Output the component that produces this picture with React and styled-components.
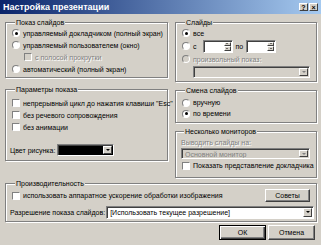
import React from 'react';
import styled, { createGlobalStyle } from 'styled-components';

const GlobalStyle = createGlobalStyle`
  html, body {
    margin: 0;
    padding: 0;
    background: #d4d0c8;
  }
  body {
    font-family: "Liberation Sans", Arial, sans-serif;
    font-size: 7px;
    color: #000;
  }
`;

const Window = styled.div`
  width: 321px;
  height: 245px;
  background: #d4d0c8;
  display: flex;
  flex-direction: column;
  overflow: hidden;
`;

const TitleBar = styled.div`
  height: 14px;
  display: flex;
  align-items: center;
  justify-content: space-between;
  padding: 0 3px 0 3px;
  background: linear-gradient(to right, #0a246a, #a6caf0);
`;

const Title = styled.span`
  color: #fff;
  font-weight: bold;
  font-size: 9px;
`;

const TitleButtons = styled.div`
  display: flex;
  gap: 1px;
`;

const TitleButton = styled.span`
  width: 9px;
  height: 8px;
  box-sizing: border-box;
  background: #d4d0c8;
  border: 1px solid;
  border-color: #fff #404040 #404040 #fff;
  display: grid;
  place-items: center;
  font-size: 7px;
  font-weight: bold;
  line-height: 1;
`;

const Body = styled.div`
  padding: 4px 4px 0 5px;
  display: flex;
  flex-direction: column;
`;

const Columns = styled.div`
  display: grid;
  grid-template-columns: 163px 142px;
  column-gap: 7px;
  align-items: start;
`;

const Column = styled.div`
  display: flex;
  flex-direction: column;
  gap: ${p => p.$gap}px;
`;

const Group = styled.fieldset`
  margin: ${p => p.$mt || 0}px 0 0 0;
  box-sizing: border-box;
  height: ${p => p.$h}px;
  min-width: 0;
  padding: ${p => p.$pad || '0 4px 0 6px'};
  border: 1px solid #808080;
  box-shadow: inset 1px 1px #fff, 1px 1px #fff;
  display: flex;
  flex-direction: column;
`;

const Legend = styled.legend`
  margin-left: 3px;
  padding: 0 1px;
  line-height: 9px;
  background: #d4d0c8;
`;

const Row = styled.div`
  display: flex;
  align-items: center;
  gap: ${p => p.$gap ?? 3}px;
  height: ${p => p.$h || 12}px;
  margin-top: ${p => p.$mt || 0}px;
  padding-left: ${p => p.$indent || 0}px;
  white-space: nowrap;
`;

const Mark = styled.span`
  flex: none;
  width: 8px;
  height: 8px;
  box-sizing: border-box;
  border: 1px solid;
  border-color: #808080 #fff #fff #808080;
  border-radius: ${p => (p.$round ? '50%' : '0')};
  background: ${p => (p.$disabled ? '#d4d0c8' : '#fff')};
  display: grid;
  place-items: center;

  &::after {
    content: '';
    display: ${p => (p.$checked ? 'block' : 'none')};
    width: 3px;
    height: 3px;
    border-radius: 50%;
    background: #000;
  }
`;

const Text = styled.span`
  color: ${p => (p.$disabled ? '#808080' : '#000')};
  text-shadow: ${p => (p.$disabled ? '1px 1px #fff' : 'none')};
`;

const Field = styled.div`
  flex: none;
  width: ${p => p.$w}px;
  height: ${p => p.$h || 12}px;
  box-sizing: border-box;
  margin-left: ${p => p.$ml || 0}px;
  border: 1px solid;
  border-color: #808080 #fff #fff #808080;
  box-shadow: inset 1px 1px #404040;
  background: ${p => p.$fill || '#fff'};
  display: flex;
  align-items: stretch;
`;

const FieldValue = styled.span`
  flex: 1;
  display: flex;
  align-items: center;
  padding: 1px 0 0 3px;
  overflow: hidden;
  white-space: nowrap;
  color: ${p => (p.$disabled ? '#808080' : '#000')};
`;

const DropButton = styled.span`
  flex: none;
  width: 9px;
  margin: 1px 1px 1px 0;
  box-sizing: border-box;
  background: #d4d0c8;
  border: 1px solid;
  border-color: #fff #404040 #404040 #fff;
  display: grid;
  place-items: center;

  &::after {
    content: '';
    border-left: 2px solid transparent;
    border-right: 2px solid transparent;
    border-top: 2px solid ${p => (p.$disabled ? '#808080' : '#000')};
  }
`;

const SpinButtons = styled.span`
  flex: none;
  width: 7px;
  margin: 1px 1px 1px 0;
  display: flex;
  flex-direction: column;
`;

const SpinHalf = styled.span`
  flex: 1;
  box-sizing: border-box;
  background: #d4d0c8;
  border: 1px solid;
  border-color: #fff #404040 #404040 #fff;
  display: grid;
  place-items: center;

  &::after {
    content: '';
    border-left: 1.5px solid transparent;
    border-right: 1.5px solid transparent;
    ${p => (p.$up ? 'border-bottom' : 'border-top')}: 1.5px solid #000;
  }
`;

const Button = styled.div`
  width: ${p => p.$w}px;
  height: ${p => p.$h}px;
  box-sizing: border-box;
  border: 1px solid;
  border-color: ${p => (p.$default ? '#000' : '#fff #404040 #404040 #fff')};
  box-shadow: ${p =>
    p.$default
      ? 'inset 1px 1px #fff, inset -1px -1px #404040, inset -2px -2px #808080'
      : 'inset -1px -1px #808080'};
  display: grid;
  place-items: center;
  flex: none;
  margin-left: ${p => (p.$push ? 'auto' : '0')};
`;

const Footer = styled.div`
  display: flex;
  justify-content: flex-end;
  gap: 2px;
  margin: 3px 2px 0 0;
`;

const Radio = ({ checked, disabled, children }) => (
  <Row>
    <Mark $round $checked={checked} $disabled={disabled} />
    <Text $disabled={disabled}>{children}</Text>
  </Row>
);

const Check = ({ disabled, indent, children }) => (
  <Row $indent={indent}>
    <Mark $disabled={disabled} />
    <Text $disabled={disabled}>{children}</Text>
  </Row>
);

const Spin = ({ w, ml }) => (
  <Field $w={w} $h={13} $ml={ml}>
    <FieldValue />
    <SpinButtons>
      <SpinHalf $up />
      <SpinHalf />
    </SpinButtons>
  </Field>
);

const Dropdown = ({ w, h, fill, disabled, value }) => (
  <Field $w={w} $h={h} $fill={disabled ? '#d4d0c8' : fill}>
    <FieldValue $disabled={disabled}>{value}</FieldValue>
    <DropButton $disabled={disabled} />
  </Field>
);

export default function App() {
  return (
    <>
      <GlobalStyle />
      <Window>
        <TitleBar>
          <Title>Настройка презентации</Title>
          <TitleButtons>
            <TitleButton>?</TitleButton>
            <TitleButton>×</TitleButton>
          </TitleButtons>
        </TitleBar>
        <Body>
          <Columns>
            <Column $gap={7}>
              <Group $h={60}>
                <Legend>Показ слайдов</Legend>
                <Radio checked>управляемый докладчиком (полный экран)</Radio>
                <Radio>управляемый пользователем (окно)</Radio>
                <Check disabled indent={12}>с полосой прокрутки</Check>
                <Radio>автоматический (полный экран)</Radio>
              </Group>
              <Group $h={76} $pad="3px 2px 0 6px">
                <Legend>Параметры показа</Legend>
                <Check>непрерывный цикл до нажатия клавиши "Esc"</Check>
                <Check>без речевого сопровождения</Check>
                <Check>без анимации</Check>
                <Row $mt={11} $gap={2} style={{ marginLeft: -2 }}>
                  <Text>Цвет рисунка:</Text>
                  <Dropdown w={57} fill="#000" />
                </Row>
              </Group>
            </Column>
            <Column $gap={4}>
              <Group $h={64}>
                <Legend>Слайды</Legend>
                <Radio checked>все</Radio>
                <Row $h={14}>
                  <Mark $round />
                  <Text>с</Text>
                  <Spin w={30} ml={3} />
                  <Text>по</Text>
                  <Spin w={30} />
                </Row>
                <Radio disabled>произвольный показ:</Radio>
                <Row $h={13} $indent={11}>
                  <Dropdown w={117} disabled />
                </Row>
              </Group>
              <Group $h={37} $pad="2px 4px 0 6px">
                <Legend>Смена слайдов</Legend>
                <Row $h={11}>
                  <Mark $round />
                  <Text>вручную</Text>
                </Row>
                <Row $h={11}>
                  <Mark $round $checked />
                  <Text>по времени</Text>
                </Row>
              </Group>
              <Group $h={51} $pad="1px 4px 0 5px">
                <Legend>Несколько мониторов</Legend>
                <Row $h={11}>
                  <Text $disabled>Выводить слайды на:</Text>
                </Row>
                <Row $h={11}>
                  <Dropdown w={129} h={11} disabled value="Основной монитор" />
                </Row>
                <Row $h={13} $indent={1}>
                  <Mark />
                  <Text>Показать представление докладчика</Text>
                </Row>
              </Group>
            </Column>
          </Columns>
          <Group $h={43} $mt={1} $pad="1px 6px 0 6px">
            <Legend>Производительность</Legend>
            <Row $h={13}>
              <Mark />
              <Text>использовать аппаратное ускорение обработки изображения</Text>
              <Button $w={45} $h={13} $push>Советы</Button>
            </Row>
            <Row $h={14} $mt={3} $gap={1} style={{ marginLeft: -2 }}>
              <Text>Разрешение показа слайдов:</Text>
              <Dropdown w={208} h={13} value="[Использовать текущее разрешение]" />
            </Row>
          </Group>
          <Footer>
            <Button $w={47} $h={15} $default>ОК</Button>
            <Button $w={47} $h={15}>Отмена</Button>
          </Footer>
        </Body>
      </Window>
    </>
  );
}
